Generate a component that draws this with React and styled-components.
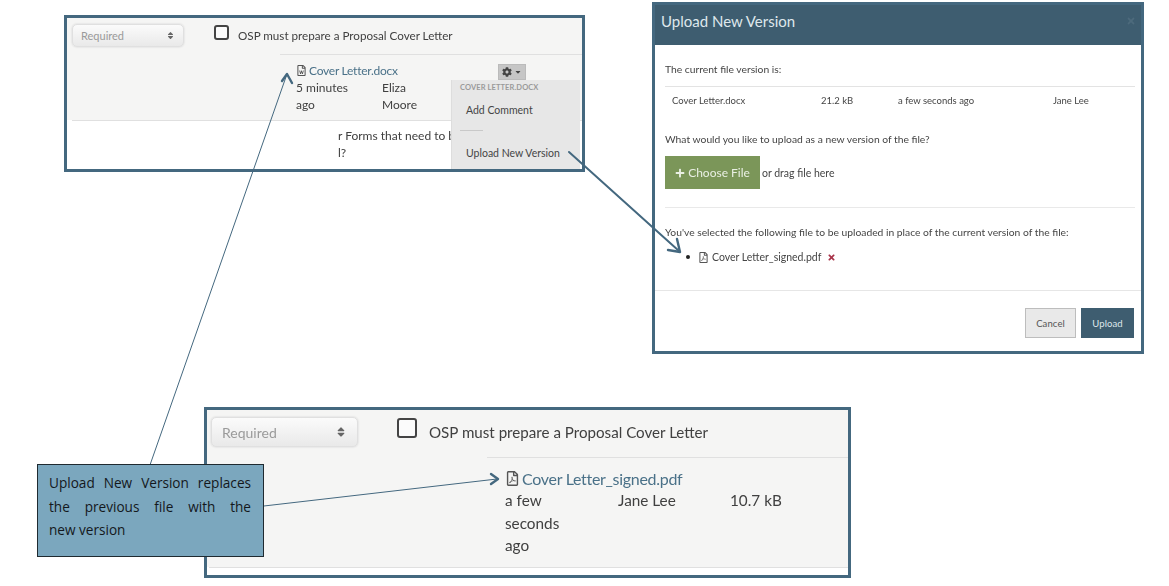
import styled, { createGlobalStyle } from "styled-components";
import { FaCog, FaCaretDown, FaPlus, FaTimes, FaSort, FaRegFilePdf, FaRegFileWord } from "react-icons/fa";

const GlobalStyle = createGlobalStyle`
  html, body {
    margin: 0;
    background: #fff;
    font-family: "Lato", "Noto Sans", sans-serif;
    color: #3f3f3f;
  }
`;

const Canvas = styled.div`
  position: relative;
  width: 1169px;
  height: 586px;
  overflow: hidden;
`;

// each screenshot sits on the canvas like a window on a desktop
const Shot = styled.div`
  position: absolute;
  left: ${(p) => p.$x}px;
  top: ${(p) => p.$y}px;
  width: ${(p) => p.$w}px;
  height: ${(p) => p.$h}px;
  box-sizing: border-box;
  border: 3px solid #44687f;
  background: #fff;
  overflow: hidden;
`;

// the pasted screenshots are a bit soft, blur only what is inside the frame
const Soft = styled.div`
  height: 100%;
  filter: blur(${(p) => p.$blur}px);
`;

const Gray = styled.div`
  background: #f5f5f4;
  height: ${(p) => p.$h}px;
  padding: ${(p) => p.$pad};
  box-sizing: border-box;
`;

const TopRow = styled.div`
  display: flex;
  align-items: center;
  height: ${(p) => p.$h}px;
  padding-bottom: ${(p) => p.$pb}px;
  box-sizing: border-box;
`;

const Select = styled.div`
  box-sizing: border-box;
  width: ${(p) => p.$w}px;
  height: ${(p) => p.$h}px;
  border: 1px solid #e0e0e0;
  border-radius: 5px;
  background: linear-gradient(#fbfbfb, #e9e9e9);
  box-shadow: 0 0 2px #ccc;
  color: #9a9a9a;
  font-size: ${(p) => p.$fs}px;
  display: flex;
  align-items: center;
  justify-content: space-between;
  padding: 0 ${(p) => p.$pad}px;
  svg {
    color: #666;
    width: ${(p) => p.$fs - 2}px;
    height: ${(p) => p.$fs - 2}px;
  }
`;

const Check = styled.span`
  box-sizing: border-box;
  flex: none;
  width: ${(p) => p.$s}px;
  height: ${(p) => p.$s}px;
  border: 2px solid #444;
  border-radius: 3px;
  background: #fbfbfb;
  margin: ${(p) => p.$m};
`;

const Label = styled.span`
  font-size: ${(p) => p.$fs}px;
  color: #404040;
  white-space: nowrap;
`;

const Rule = styled.div`
  height: 1px;
  background: #e0e0e0;
  margin-left: ${(p) => p.$ml}px;
`;

const FileBlock = styled.div`
  margin-left: ${(p) => p.$ml}px;
  padding-top: ${(p) => p.$pt}px;
  position: relative;
`;

const FileLink = styled.div`
  display: flex;
  align-items: center;
  gap: ${(p) => p.$gap}px;
  font-size: ${(p) => p.$fs}px;
  letter-spacing: ${(p) => p.$ls || 0}px;
  line-height: ${(p) => p.$lh}px;
  color: #4a7188;
  white-space: nowrap;
  svg {
    color: #555;
    flex: none;
  }
`;

const MetaRow = styled.div`
  display: grid;
  grid-template-columns: ${(p) => p.$cols};
  font-size: ${(p) => p.$fs}px;
  line-height: ${(p) => p.$lh}px;
  color: #404040;
`;

const MetaCell = styled.div`
  width: ${(p) => p.$w}px;
`;

const GearButton = styled.div`
  position: absolute;
  left: 202px;
  top: 9px;
  width: 28px;
  height: 16px;
  background: #c6c6c6;
  border: 1px solid #bbb;
  box-sizing: border-box;
  display: flex;
  align-items: center;
  justify-content: center;
  gap: 2px;
  color: #444;
`;

const Menu = styled.div`
  position: absolute;
  left: 384px;
  top: 62px;
  width: 129px;
  height: 92px;
  background: #e7e7e7;
  border-left: 1px solid #ddd;
  box-sizing: border-box;
  padding: 2px 0 0 8px;
`;

const MenuHead = styled.div`
  font-size: 7.5px;
  font-weight: 700;
  letter-spacing: 0.1px;
  color: #9a9a9a;
  line-height: 11px;
`;

const MenuItem = styled.div`
  font-size: 10.5px;
  color: #454545;
  padding-left: 6px;
  line-height: 14px;
  margin-top: ${(p) => p.$mt}px;
  white-space: nowrap;
`;

const MenuDivider = styled.div`
  width: 23px;
  height: 1px;
  background: #c9c9c9;
  margin-top: 13px;
`;

const CutText = styled.div`
  padding: 6px 0 0 271px;
  font-size: 12px;
  line-height: 17px;
  color: #404040;
  white-space: nowrap;
`;

const ModalHeader = styled.div`
  height: 40px;
  background: #3e5d70;
  color: #dfe7ec;
  font-size: 15px;
  display: flex;
  align-items: center;
  justify-content: space-between;
  padding: 0 5px 8px 6px;
  box-sizing: border-box;
  svg {
    color: #4d6a7c;
  }
`;

const ModalBody = styled.div`
  padding: 0 6px 0 10px;
  font-size: 10.3px;
  color: #454545;
`;

const ModalText = styled.div`
  line-height: 14px;
  padding-top: ${(p) => p.$pt}px;
  white-space: nowrap;
`;

const VersionRow = styled.div`
  display: grid;
  grid-template-columns: 149px 77px 155px 1fr;
  border-top: 1px solid #e3e3e3;
  margin-top: 10px;
  padding: 7px 0 0 7px;
  line-height: 14px;
  font-size: 9.5px;
`;

const ChooseRow = styled.div`
  display: flex;
  align-items: center;
  gap: 2px;
  margin-top: 10px;
  font-size: 10.5px;
`;

const ChooseButton = styled.div`
  width: 95px;
  height: 33px;
  background: #7b9659;
  color: #e9efe3;
  font-size: 12px;
  display: flex;
  align-items: center;
  justify-content: center;
  gap: 3px;
`;

const ThickRule = styled.div`
  height: 1px;
  background: #e9e9e9;
  margin-top: 18px;
`;

const Bullet = styled.div`
  display: flex;
  align-items: center;
  margin: 12px 0 0 21px;
  font-size: 10.5px;
  color: #454545;
  svg.pdf {
    color: #555;
    margin: 0 3px 0 8px;
  }
  svg.del {
    color: #a8344a;
    margin-left: 6px;
  }
`;

const Dot = styled.span`
  width: 4px;
  height: 4px;
  border-radius: 50%;
  background: #222;
`;

const ModalFooter = styled.div`
  border-top: 1px solid #e6e6e6;
  margin-top: 27px;
  padding: 17px 7px 0 0;
  display: flex;
  justify-content: flex-end;
  gap: 5px;
`;

const FootButton = styled.div`
  box-sizing: border-box;
  height: 30px;
  width: ${(p) => p.$w}px;
  background: ${(p) => (p.$primary ? "#3e5d70" : "#e9e9e9")};
  border: 1px solid ${(p) => (p.$primary ? "#3e5d70" : "#bdbdbd")};
  color: ${(p) => (p.$primary ? "#dfe7ec" : "#555")};
  font-size: 9.5px;
  letter-spacing: 0.1px;
  display: flex;
  align-items: center;
  justify-content: center;
`;

const Callout = styled.div`
  position: absolute;
  left: 37px;
  top: 464px;
  width: 227px;
  height: 93px;
  box-sizing: border-box;
  background: #7ba7be;
  border: 1px solid #1f2a30;
  padding: 6px 12px 0 11px;
  font-family: "Open Sans", "Noto Sans", sans-serif;
  font-size: 13.6px;
  line-height: 23.5px;
  color: #14181c;
`;

const CalloutLine = styled.div`
  white-space: normal;
  text-align: ${(p) => (p.$fill ? "justify" : "left")};
  text-align-last: ${(p) => (p.$fill ? "justify" : "left")};
`;

const Arrows = styled.svg`
  position: absolute;
  left: 0;
  top: 0;
  pointer-events: none;
`;

const App = () => {
  return (
    <Canvas>
      <GlobalStyle />

      <Shot $x={64} $y={15} $w={521} $h={157}>
        <Soft $blur={0.35}>
          <Gray $h={102} $pad="0 0 0 5px">
            <TopRow $h={36} $pb={2}>
              <Select $w={112} $h={23} $fs={11} $pad={8}>
                Required
                <FaSort />
              </Select>
              <Check $s={15} $m="-6px 9px 0 30px" />
              <Label $fs={11.65}>OSP must prepare a Proposal Cover Letter</Label>
            </TopRow>
            <Rule $ml={208} />
            <FileBlock $ml={224} $pt={7}>
              <FileLink $fs={12} $ls={-0.25} $lh={17} $gap={2}>
                <FaRegFileWord size={11} />
                Cover Letter.docx
              </FileLink>
              <MetaRow $fs={12} $lh={17} $cols="86px 60px">
                <MetaCell $w={60}>5 minutes ago</MetaCell>
                <MetaCell $w={50}>Eliza Moore</MetaCell>
              </MetaRow>
              <GearButton>
                <FaCog size={10} />
                <FaCaretDown size={8} />
              </GearButton>
            </FileBlock>
          </Gray>
          <Rule $ml={5} />
          <CutText>
            r Forms that need to be
            <br />
            l?
          </CutText>
          <Menu>
            <MenuHead>COVER LETTER.DOCX</MenuHead>
            <MenuItem $mt={10}>Add Comment</MenuItem>
            <MenuDivider />
            <MenuItem $mt={15}>Upload New Version</MenuItem>
          </Menu>
        </Soft>
      </Shot>

      <Shot $x={652} $y={2} $w={492} $h={352}>
        <Soft $blur={0.3}>
          <ModalHeader>
            Upload New Version
            <FaTimes size={10} />
          </ModalHeader>
          <ModalBody>
            <ModalText $pt={17}>The current file version is:</ModalText>
            <VersionRow>
              <span>Cover Letter.docx</span>
              <span>21.2 kB</span>
              <span>a few seconds ago</span>
              <span>Jane Lee</span>
            </VersionRow>
            <ModalText $pt={24}>What would you like to upload as a new version of the file?</ModalText>
            <ChooseRow>
              <ChooseButton>
                <FaPlus size={10} />
                Choose File
              </ChooseButton>
              or drag file here
            </ChooseRow>
            <ThickRule />
            <ModalText $pt={17}>You've selected the following file to be uploaded in place of the current version of the file:</ModalText>
            <Bullet>
              <Dot />
              <FaRegFilePdf className="pdf" size={11} />
              <span>Cover Letter_signed.pdf</span>
              <FaTimes className="del" size={9} />
            </Bullet>
          </ModalBody>
          <ModalFooter>
            <FootButton $w={51}>Cancel</FootButton>
            <FootButton $w={53} $primary>Upload</FootButton>
          </ModalFooter>
        </Soft>
      </Shot>

      <Shot $x={204} $y={407} $w={647} $h={171}>
        <Soft $blur={0.2}>
          <Gray $h={157} $pad="0 0 0 4px">
            <TopRow $h={47} $pb={3}>
              <Select $w={147} $h={30} $fs={14} $pad={10}>
                Required
                <FaSort />
              </Select>
              <Check $s={20} $m="-8px 12px 0 39px" />
              <Label $fs={15.15}>OSP must prepare a Proposal Cover Letter</Label>
            </TopRow>
            <Rule $ml={276} />
            <FileBlock $ml={294} $pt={10}>
              <FileLink $fs={16} $ls={-0.3} $lh={21} $gap={2}>
                <FaRegFilePdf size={15} />
                Cover Letter_signed.pdf
              </FileLink>
              <MetaRow $fs={15.3} $lh={22.5} $cols="113px 112px 60px">
                <MetaCell $w={60}>a few seconds ago</MetaCell>
                <MetaCell $w={80}>Jane Lee</MetaCell>
                <MetaCell $w={60}>10.7 kB</MetaCell>
              </MetaRow>
            </FileBlock>
          </Gray>
          <Rule $ml={2} />
        </Soft>
      </Shot>

      <Arrows width="1169" height="586" viewBox="0 0 1169 586">
        <g fill="none" stroke="#44687f" strokeLinecap="round" strokeLinejoin="round">
          <line x1="150" y1="465" x2="287" y2="74" strokeWidth="1" />
          <polyline points="282,81 287,74 292,83" strokeWidth="2.4" />
          <line x1="264" y1="506" x2="497" y2="479" strokeWidth="1" />
          <polyline points="491,474 498,479 491,484" strokeWidth="2.4" />
          <line x1="569" y1="152" x2="679" y2="251" strokeWidth="2" />
          <polyline points="668,250 680,252 677,239" strokeWidth="2.4" />
        </g>
      </Arrows>

      <Callout>
        <CalloutLine $fill>Upload New Version replaces</CalloutLine>
        <CalloutLine $fill>the previous file with the</CalloutLine>
        <CalloutLine>new version</CalloutLine>
      </Callout>
    </Canvas>
  );
};

export default App;
